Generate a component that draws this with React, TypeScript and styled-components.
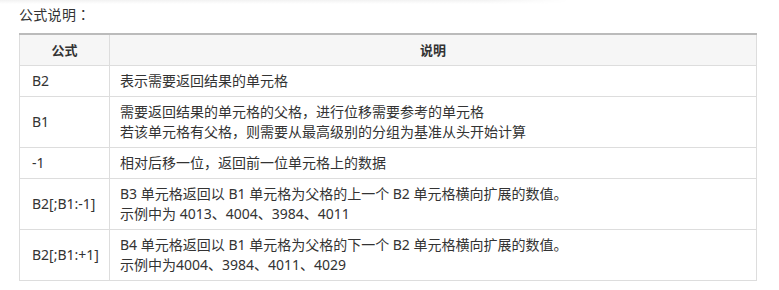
import React, {FC} from 'react';
import styled, {createGlobalStyle} from 'styled-components';

const GlobalStyle = createGlobalStyle`
  body {
    margin: 0;
    background: #fff;
    font-family: "Noto Sans", "Noto Sans CJK SC", sans-serif;
    color: #333;
  }
`;

const Page = styled.div`
  width: 779px;
  height: 290px;
  overflow: hidden;
  box-sizing: border-box;
`;

const TopShade = styled.div`
  width: 570px;
  height: 4px;
  background: linear-gradient(to bottom, #f2f2f2, #fff);
  -webkit-mask-image: linear-gradient(to right, #000 85%, transparent);
  mask-image: linear-gradient(to right, #000 85%, transparent);
`;

const Content = styled.div`
  padding: 0 22px 0 19px;
`;

const Title = styled.div`
  font-size: 14px;
  line-height: 20px;
  height: 29px;
  letter-spacing: 0.3px;
`;

// centred full-width colon, like the reference font draws it
const Colon = styled.span`
  font-family: "Noto Sans CJK TC", sans-serif;
`;

const Table = styled.table`
  width: 738px;
  border-collapse: collapse;
  border-top: 2px solid #bbb;
  font-size: 14px;
  line-height: 20px;
`;

const HeadCell = styled.th<{$narrow?: boolean}>`
  background: #f6f6f6;
  border: 1px solid #ddd;
  border-top: none;
  height: 30px;
  padding: 0 10px;
  width: ${(p) => (p.$narrow ? '67px' : 'auto')};
  font-weight: bold;
  font-size: 13px;
  text-align: center;
  color: #333;
`;

const Cell = styled.td<{$first?: boolean}>`
  border: 1px solid #ddd;
  padding: 5px 10px 5px ${(p) => (p.$first ? '12px' : '10px')};
  width: ${(p) => (p.$first ? '67px' : 'auto')};
  vertical-align: middle;
  color: #333;
  white-space: nowrap;
`;

interface IRow {
  formula: string;
  lines: string[];
}

const rows: IRow[] = [
  {formula: 'B2', lines: ['表示需要返回结果的单元格']},
  {
    formula: 'B1',
    lines: [
      '需要返回结果的单元格的父格，进行位移需要参考的单元格',
      '若该单元格有父格，则需要从最高级别的分组为基准从头开始计算',
    ],
  },
  {formula: '-1', lines: ['相对后移一位，返回前一位单元格上的数据']},
  {
    formula: 'B2[;B1:-1]',
    lines: [
      'B3 单元格返回以 B1 单元格为父格的上一个 B2 单元格横向扩展的数值。',
      '示例中为 4013、4004、3984、4011',
    ],
  },
  {
    formula: 'B2[;B1:+1]',
    lines: [
      'B4 单元格返回以 B1 单元格为父格的下一个 B2 单元格横向扩展的数值。',
      '示例中为4004、3984、4011、4029',
    ],
  },
];

const App: FC = () => {
  return (
    <Page>
      <GlobalStyle/>
      <TopShade/>
      <Content>
        <Title>公式说明<Colon>：</Colon></Title>
        <Table>
          <thead>
            <tr>
              <HeadCell $narrow>公式</HeadCell>
              <HeadCell>说明</HeadCell>
            </tr>
          </thead>
          <tbody>
            {rows.map((row) => (
              <tr key={row.formula}>
                <Cell $first>{row.formula}</Cell>
                <Cell>
                  {row.lines.map((line, i) => (
                    <div key={i}>{line}</div>
                  ))}
                </Cell>
              </tr>
            ))}
          </tbody>
        </Table>
      </Content>
    </Page>
  );
};

export default App;
